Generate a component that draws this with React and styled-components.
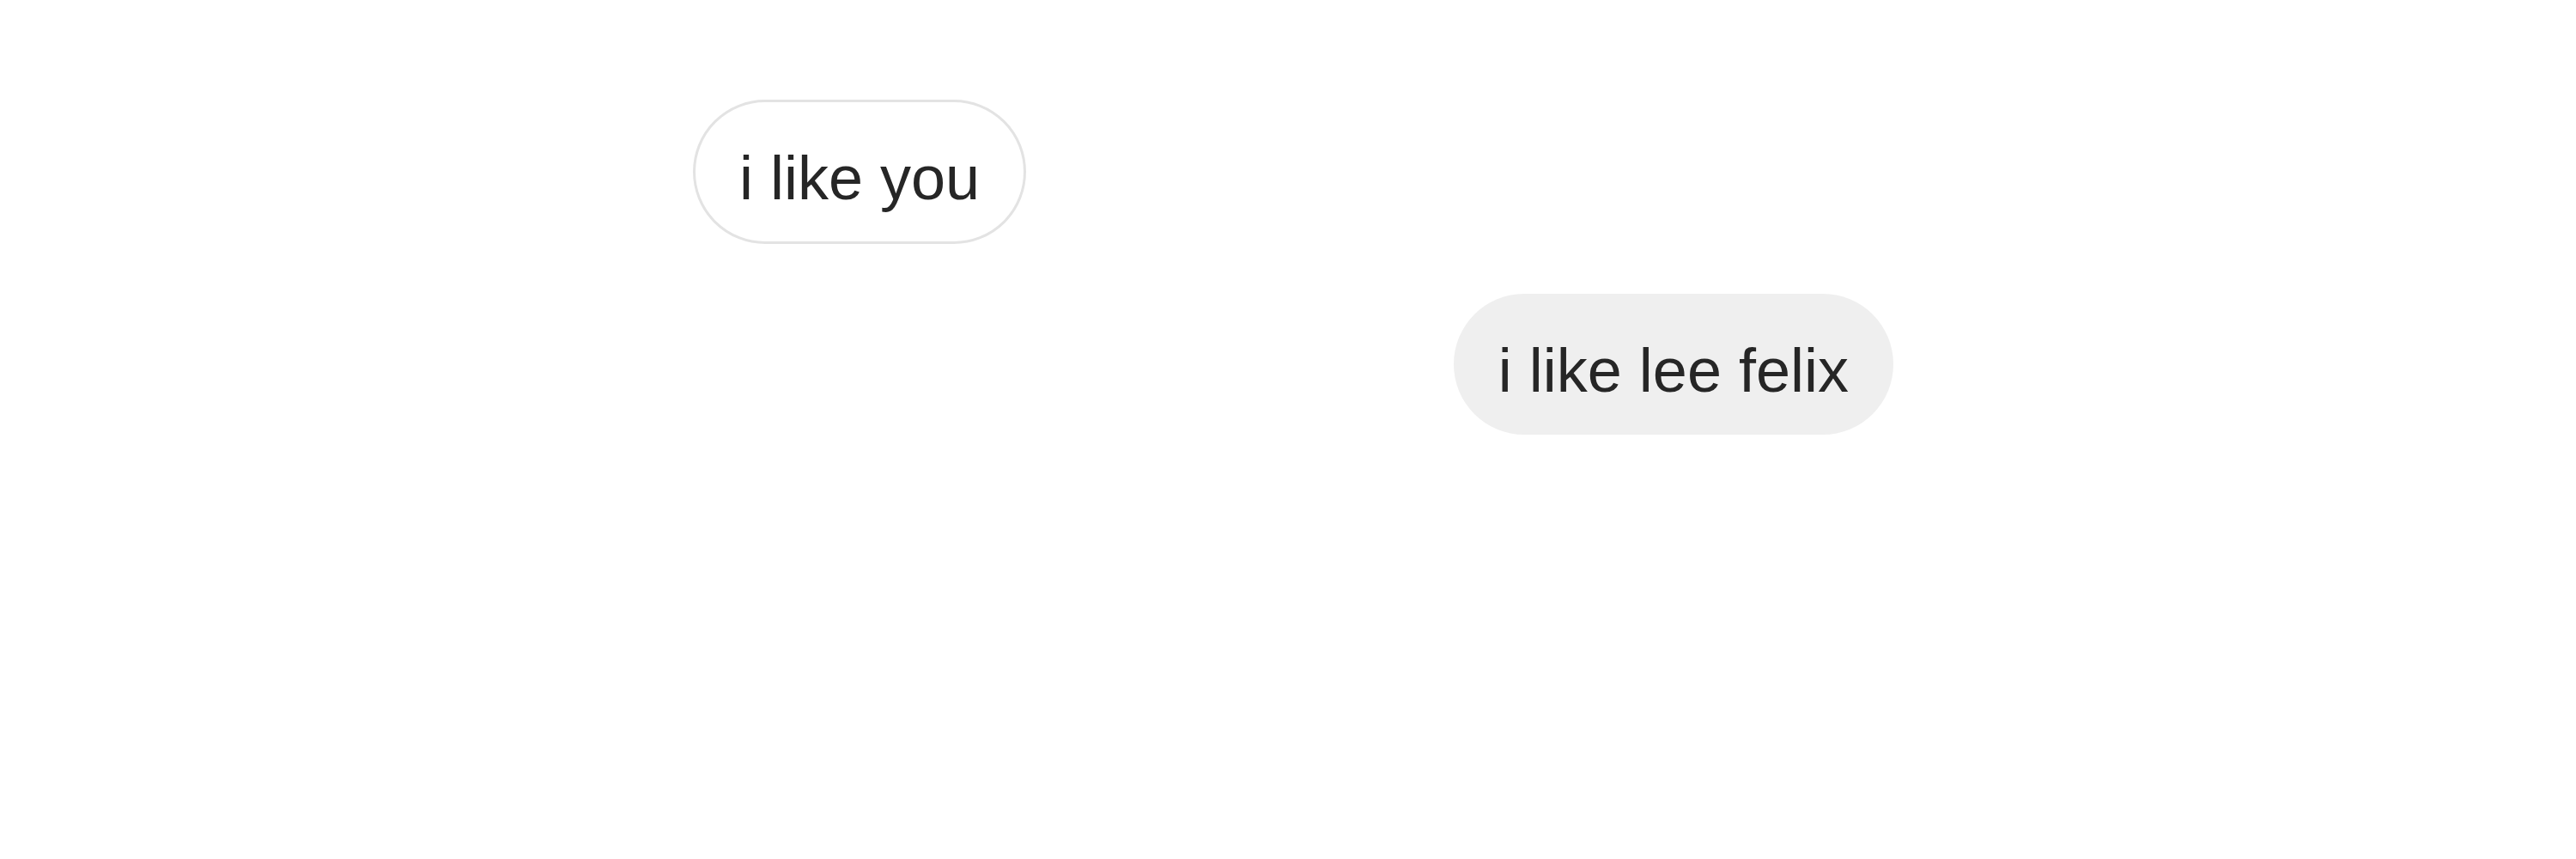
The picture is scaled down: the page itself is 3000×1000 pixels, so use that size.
import React from 'react';
import styled, { createGlobalStyle } from 'styled-components';

const GlobalStyle = createGlobalStyle`
  html, body {
    margin: 0;
    padding: 0;
    background: #ffffff;
  }
  body {
    font-family: "Liberation Sans", Arial, sans-serif;
  }
`;

const Page = styled.div`
  width: 3000px;
  height: 1000px;
  background: #ffffff;
  padding: 116px 0 0 807px;
  box-sizing: border-box;
`;

const Thread = styled.div`
  width: 1398px;
  display: flex;
  flex-direction: column;
  gap: 58px;
`;

const Bubble = styled.div`
  align-self: ${(p) => (p.mine ? 'flex-end' : 'flex-start')};
  background: ${(p) => (p.mine ? '#efefef' : '#ffffff')};
  border: ${(p) => (p.mine ? 'none' : '3px solid #e3e3e3')};
  border-radius: 999px;
  padding: ${(p) => (p.mine ? '46px 52px 32px' : '45px 51px 31px')};
  font-size: 72px;
  line-height: 86px;
  color: #262626;
  white-space: nowrap;
`;

const messages = [
  { id: 1, text: 'i like you', mine: false },
  { id: 2, text: 'i like lee felix', mine: true }
];

export default function App() {
  return (
    <>
      <GlobalStyle />
      <Page>
        <Thread>
          {messages.map((m) => (
            <Bubble key={m.id} mine={m.mine}>
              {m.text}
            </Bubble>
          ))}
        </Thread>
      </Page>
    </>
  );
}
